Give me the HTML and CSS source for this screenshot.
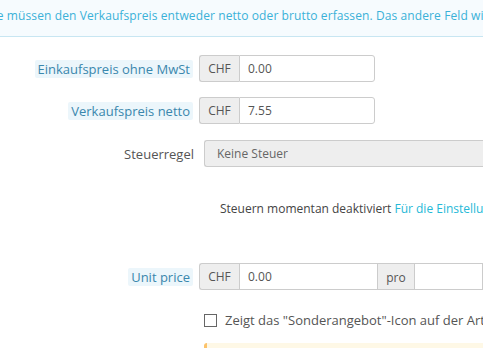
FILE: index.html
```html
<!DOCTYPE html>
<html>
<head>
<meta charset="utf-8">
<link rel="stylesheet" href="styles.css">
</head>
<body>
<div class="alert">Sie müssen den Verkaufspreis entweder netto oder brutto erfassen. Das andere Feld wird automatisch berechnet.</div>
<div class="form">
  <div class="row r1">
    <div class="lab"><span class="hint">Einkaufspreis ohne MwSt</span></div>
    <div class="group w176">
      <span class="addon">CHF</span>
      <span class="inp">0.00</span>
    </div>
  </div>
  <div class="row r2">
    <div class="lab"><span class="hint">Verkaufspreis netto</span></div>
    <div class="group w176">
      <span class="addon">CHF</span>
      <span class="inp">7.55</span>
    </div>
  </div>
  <div class="row r3">
    <div class="lab plain">Steuerregel</div>
    <div class="select">Keine Steuer</div>
  </div>
  <div class="row r4">
    <div class="info">Steuern momentan deaktiviert <a class="link">Für die Einstellungen hier klicken</a></div>
  </div>
  <div class="row r5">
    <div class="lab"><span class="hint">Unit price</span></div>
    <div class="group wide">
      <span class="addon">CHF</span>
      <span class="inp i138">0.00</span>
      <span class="addon pro">pro</span>
      <span class="inp grow"></span>
    </div>
  </div>
  <div class="row r6">
    <label class="check"><span class="box"></span>Zeigt das "Sonderangebot"-Icon auf der Artikelseite und im Warenkorb</label>
  </div>
  <div class="row r7">
    <div class="warn"></div>
  </div>
</div>
</body>
</html>
```
FILE: styles.css
```css
html, body {
  margin: 0;
  padding: 0;
  background: #fff;
  overflow: hidden;
}
body {
  font-family: "Open Sans", "DejaVu Sans", sans-serif;
  font-size: 12px;
  color: #555;
  width: 483px;
  height: 348px;
}
.alert {
  height: 36px;
  box-sizing: content-box;
  background: #f6fbfe;
  border-bottom: 1px solid #c8e6f2;
  color: #3ab1d8;
  line-height: 31px;
  white-space: nowrap;
  margin-left: -13px;
  letter-spacing: 0.1px;
}
.form {
  display: flex;
  flex-direction: column;
}
.row {
  display: flex;
  align-items: center;
  white-space: nowrap;
}
.lab {
  width: 193px;
  flex: none;
  display: flex;
  justify-content: flex-end;
}
.hint {
  background: #ecf6fb;
  color: #3a87ad;
  padding: 0 3px;
  line-height: 18px;
  border-radius: 2px;
  font-size: 13px;
}
.plain {
  width: 194px;
  color: #555;
  font-size: 13px;
}
.group {
  display: flex;
  margin-left: 6px;
  height: 27px;
  box-sizing: border-box;
}
.w176 { width: 176px; }
.wide { flex: 1; min-width: 0; }
.addon {
  flex: none;
  width: 40px;
  box-sizing: border-box;
  background: #eee;
  border: 1px solid #ccc;
  border-right: 0;
  border-radius: 3px 0 0 3px;
  display: flex;
  align-items: center;
  justify-content: center;
  color: #555;
  font-size: 12px;
}
.inp {
  flex: 1;
  box-sizing: border-box;
  border: 1px solid #ccc;
  border-radius: 0 3px 3px 0;
  background: #fff;
  display: flex;
  align-items: center;
  padding-left: 8px;
  color: #555;
  font-size: 12px;
}
.i138 { flex: none; width: 138px; border-radius: 0; border-right: 0; }
.pro { width: 37px; border-radius: 0; border-right: 0; padding-top: 2px; }
.grow { flex: 1; border-radius: 0; }
.r1 { margin-top: 18px; }
.r2 { margin-top: 15px; }
.r3 { margin-top: 16px; }
.select {
  margin-left: 10px;
  flex: 1;
  height: 27px;
  box-sizing: border-box;
  background: #eee;
  border: 1px solid #ccc;
  border-right: 0;
  border-radius: 3px 0 0 3px;
  display: flex;
  align-items: center;
  padding-left: 12px;
  color: #666;
}
.r4 { margin-top: 31px; height: 20px; }
.info {
  margin-left: 220px;
  color: #444;
}
.link { color: #25b9d7; }
.r5 { margin-top: 45px; }
.r6 { margin-top: 21px; }
.check {
  margin-left: 204px;
  display: flex;
  align-items: center;
  color: #555;
  font-size: 13px;
}
.box {
  width: 11px;
  height: 11px;
  border: 1px solid #666;
  margin-right: 8px;
  background: #fff;
}
.r7 { margin-top: 14px; }
.warn {
  margin-left: 204px;
  flex: 1;
  height: 20px;
  background: #fef8e6;
  border-left: 3px solid #fcc36b;
  border-radius: 3px 0 0 0;
}
```
